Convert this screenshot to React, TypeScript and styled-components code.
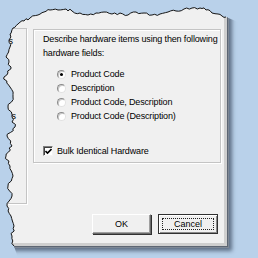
import styled, {createGlobalStyle} from "styled-components";

const GlobalStyle = createGlobalStyle`
  html, body {
    margin: 0;
    padding: 0;
    background: #b9d1ea;
  }
  body {
    font-family: "Liberation Sans", Arial, sans-serif;
    font-size: 9px;
    color: #000;
  }
`

// torn paper edge, built once from a few traced key points
let seed = 11;
const rnd = () => {
    seed = (seed * 16807) % 2147483647;
    return seed / 2147483647;
};

const leftKeys: number[][] = [
    [14, 246], [12, 236], [14, 226], [11, 216], [7, 206], [12, 196], [8, 186], [13, 176],
    [10, 166], [6, 156], [12, 146], [7, 136], [15, 127], [12, 117], [8, 107], [13, 97],
    [10, 87], [4, 77], [11, 67], [6, 57], [10, 47], [9, 40], [10, 34]
];

const topKeys: number[][] = [
    [10, 34], [13, 28], [18, 24], [24, 21], [30, 18], [38, 15], [44, 12], [50, 10], [58, 10],
    [66, 9], [72, 11], [80, 13], [88, 15], [96, 13], [104, 12], [112, 14], [120, 13],
    [128, 15], [136, 12], [144, 13], [152, 15], [160, 14], [168, 12], [176, 11], [184, 9],
    [192, 8], [200, 8], [206, 10], [212, 13], [218, 14], [222, 16], [226, 17]
];

function roughen(keys: number[][], step: number, amp: number, vertical: boolean) {
    const out: number[][] = [];
    for (let i = 0; i < keys.length - 1; i++) {
        const [x0, y0] = keys[i];
        const [x1, y1] = keys[i + 1];
        const n = Math.max(1, Math.round(Math.hypot(x1 - x0, y1 - y0) / step));
        for (let k = 0; k < n; k++) {
            const t = k / n;
            let x = x0 + (x1 - x0) * t;
            let y = y0 + (y1 - y0) * t;
            if (k > 0) {
                const d = (rnd() - 0.5) * 2 * amp;
                if (vertical) x += d; else y += d;
            }
            out.push([x, y]);
        }
    }
    out.push(keys[keys.length - 1]);
    return out;
}

const edge = [...roughen(leftKeys, 2.5, 1.6, true), ...roughen(topKeys, 2.5, 1.4, false).slice(1)];
const edgePoints = edge.map(([x, y]) => `${x.toFixed(1)},${y.toFixed(1)}`).join(" ");
const clipPolygon = [
    "258px 258px", "18px 258px",
    ...edge.map(([x, y]) => `${x.toFixed(1)}px ${y.toFixed(1)}px`),
    "238px 22px", "258px 22px"
].join(", ");

const Page = styled.div`
  position: relative;
  width: 258px;
  height: 258px;
  overflow: hidden;
`

const Stage = styled.div`
  width: 258px;
  height: 258px;
  clip-path: polygon(${clipPolygon});
`

const TornOutline = styled.svg`
  position: absolute;
  left: 0;
  top: 0;
  pointer-events: none;
`

const Window = styled.div`
  display: flex;
  flex-direction: column;
  width: 224px;
  height: 215px;
  padding-top: 28px;
  background: #f0f0f0;
  border-right: 3px solid #cfcfcf;
  border-bottom: 3px solid #cfcfcf;
  box-shadow: 1px 1px 0 #5d6673, 2px 2px 0 #7d8794, 5px 5px 4px rgba(35, 48, 68, 0.6);
`

const Panels = styled.div`
  display: flex;
  align-items: flex-start;
  gap: 6px;
`

const SidePanel = styled.div`
  box-sizing: border-box;
  width: 27px;
  height: 176px;
  padding-top: 5px;
  border: 1px solid #c4c4c4;
  border-left: none;
  box-shadow: 1px 1px 0 #fff;
  line-height: 14px;
  white-space: nowrap;
  overflow: hidden;
`

const SideLabel = styled.div<{ $gap?: number; $end: number }>`
  margin-top: ${(p) => p.$gap ?? 0}px;
  padding-right: ${(p) => p.$end}px;
  direction: rtl;
  text-align: right;
`

const GroupBox = styled.div`
  box-sizing: border-box;
  width: 188px;
  margin-top: 1px;
  padding: 2px 0 4px 9px;
  border: 1px solid #c4c4c4;
  box-shadow: inset 1px 1px 0 #fff, 1px 1px 0 #fff;
  line-height: 14px;
  letter-spacing: -0.15px;
`

const RadioList = styled.div`
  margin-top: 7px;
`

const OptionRow = styled.label<{ $indent?: number }>`
  display: flex;
  align-items: center;
  gap: 5px;
  height: 14px;
  padding-left: ${(p) => p.$indent ?? 0}px;
`

const RadioDot = styled.span<{ $on?: boolean }>`
  box-sizing: border-box;
  display: inline-flex;
  align-items: center;
  justify-content: center;
  width: 9px;
  height: 9px;
  border-radius: 50%;
  background: #fff;
  border: 1px solid;
  border-color: #8a8a8a #e2e2e2 #e2e2e2 #8a8a8a;
  box-shadow: inset 1px 1px 0 #c8c8c8;

  &::after {
    content: "";
    width: 3px;
    height: 3px;
    border-radius: 50%;
    background: ${(p) => (p.$on ? "#000" : "transparent")};
  }
`

const CheckBox = styled.span`
  box-sizing: border-box;
  display: inline-flex;
  align-items: center;
  justify-content: center;
  width: 10px;
  height: 10px;
  background: #fff;
  border: 1px solid;
  border-color: #808080 #f4f4f4 #f4f4f4 #808080;
  box-shadow: inset 1px 1px 0 #404040;
`

const CheckRow = styled(OptionRow)`
  margin-top: 21px;
  gap: 4px;
`

const ButtonRow = styled.div`
  display: flex;
  justify-content: flex-end;
  gap: 7px;
  margin-top: 10px;
  padding-right: 6px;
`

const Button = styled.button<{ $focused?: boolean }>`
  position: relative;
  box-sizing: border-box;
  width: ${(p) => (p.$focused ? 60 : 59)}px;
  height: 20px;
  padding: 0;
  font: inherit;
  color: #000;
  background: #f0f0f0;
  border: 1px solid;
  border-color: ${(p) => (p.$focused ? "#303030" : "#fff #6a6a6a #6a6a6a #fff")};
  box-shadow: ${(p) => (p.$focused
    ? "inset 1px 1px 0 #fff, inset -1px -1px 0 #8a8a8a"
    : "1px 1px 0 #303030, inset -1px -1px 0 #a0a0a0")};

  &::after {
    content: "";
    display: ${(p) => (p.$focused ? "block" : "none")};
    position: absolute;
    inset: 3px;
    border: 1px dotted #222;
  }
`

function App() {
    return (
        <>
            <GlobalStyle/>
            <Page>
                <Stage>
                    <Window>
                        <Panels>
                            <SidePanel>
                                <SideLabel $end={13}>Items</SideLabel>
                                <SideLabel $end={10} $gap={61}>Fields.</SideLabel>
                            </SidePanel>
                            <GroupBox>
                                <div>Describe hardware items using then following</div>
                                <div>hardware fields:</div>
                                <RadioList>
                                    <OptionRow $indent={14}><RadioDot $on/>Product Code</OptionRow>
                                    <OptionRow $indent={14}><RadioDot/>Description</OptionRow>
                                    <OptionRow $indent={14}><RadioDot/>Product Code, Description</OptionRow>
                                    <OptionRow $indent={14}><RadioDot/>Product Code (Description)</OptionRow>
                                </RadioList>
                                <CheckRow>
                                    <CheckBox>
                                        <svg width="7" height="7" viewBox="0 0 7 7">
                                            <polyline points="0.5,3 2.5,5 6.5,1" fill="none" stroke="#000" strokeWidth="1.6"/>
                                        </svg>
                                    </CheckBox>
                                    Bulk Identical Hardware
                                </CheckRow>
                            </GroupBox>
                        </Panels>
                        <ButtonRow>
                            <Button>OK</Button>
                            <Button $focused>Cancel</Button>
                        </ButtonRow>
                    </Window>
                </Stage>
                <TornOutline width="258" height="258" viewBox="0 0 258 258">
                    <polyline points={edgePoints} fill="none" stroke="#151515" strokeWidth="1"/>
                </TornOutline>
            </Page>
        </>
    );
}

export default App;
